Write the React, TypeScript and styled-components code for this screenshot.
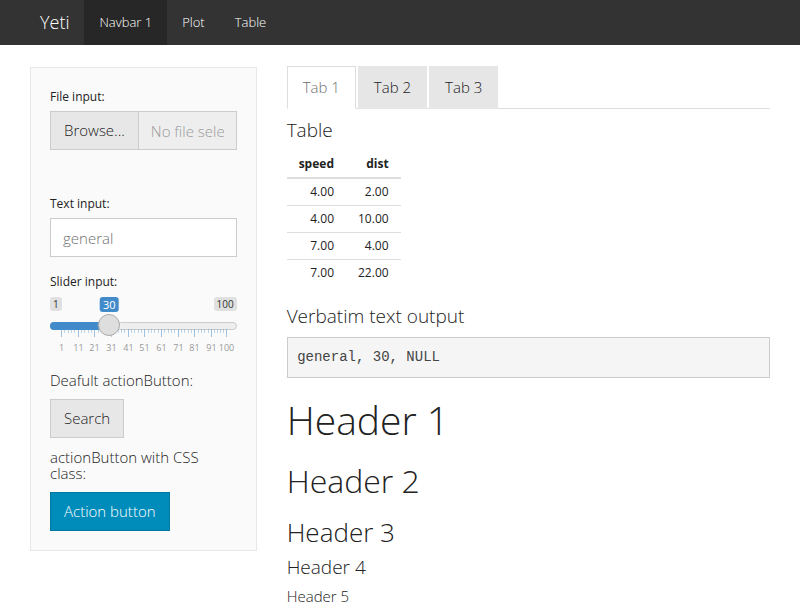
import React from "react";
import styled, { createGlobalStyle } from "styled-components";

const Global = createGlobalStyle`
  html, body { margin: 0; padding: 0; background: #fff; }
  body {
    font-family: "Open Sans", "Liberation Sans", sans-serif;
    font-weight: 300;
    font-size: 15px;
    line-height: 1.4;
    color: #222;
  }
  * { box-sizing: border-box; }
`;

const Navbar = styled.nav`
  height: 45px;
  background: #333;
  display: flex;
  align-items: stretch;
  padding: 0 0 0 25px;
`;

const Brand = styled.div`
  display: flex;
  align-items: center;
  padding: 0 15px;
  font-size: 18px;
  font-weight: 300;
  color: #fff;
`;

const NavLink = styled.div<{ $active?: boolean }>`
  display: flex;
  align-items: center;
  padding: 0 15px;
  font-size: 13px;
  font-weight: 300;
  color: #fff;
  background: ${(p) => (p.$active ? "#272727" : "transparent")};
`;

const Page = styled.div`
  display: grid;
  grid-template-columns: 226.67px 1fr;
  column-gap: 30px;
  padding: 21px 30px 0;
  align-items: start;
`;

const Well = styled.div`
  margin-top: 1px;
  background: #fafafa;
  border: 1px solid #e8e8e8;
  padding: 19px;
`;

const FormGroup = styled.div<{ $mb?: number }>`
  margin-bottom: ${(p) => (p.$mb ?? 15)}px;
`;

const Label = styled.label`
  display: block;
  font-size: 12px;
  font-weight: 400;
  line-height: 20px;
  margin-bottom: 4px;
  color: #222;
`;

const InputGroup = styled.div`
  display: flex;
  height: 39px;
`;

const BrowseButton = styled.span`
  flex: none;
  display: flex;
  align-items: center;
  padding: 0 13px;
  background: #e7e7e7;
  border: 1px solid #ccc;
  color: #222;
  font-size: 15px;
`;

const FileName = styled.input`
  flex: 1;
  min-width: 0;
  height: 39px;
  margin: 0 0 0 -1px;
  padding: 0 12px;
  border: 1px solid #ccc;
  background: #eee;
  font-family: inherit;
  font-weight: 300;
  font-size: 15px;
  color: #6f6f6f;
  &::placeholder { color: #999; opacity: 1; }
  outline: none;
`;

const TextInput = styled.input`
  display: block;
  width: 100%;
  height: 39px;
  margin: 0;
  padding: 0 12px;
  border: 1px solid #ccc;
  background: #fff;
  font-family: inherit;
  font-weight: 300;
  font-size: 15px;
  color: #6f6f6f;
  outline: none;
`;

const SliderBox = styled.div`
  position: relative;
  height: 61px;
`;

const EdgeLabel = styled.span<{ $side: "left" | "right" }>`
  position: absolute;
  top: 1px;
  ${(p) => (p.$side === "left" ? "left: 0;" : "right: 0;")}
  padding: 1px 3px;
  font-size: 10px;
  font-weight: 400;
  line-height: 12px;
  color: #333;
  background: rgba(0, 0, 0, 0.1);
  border-radius: 3px;
`;

const SingleLabel = styled.span`
  position: absolute;
  top: 1px;
  transform: translateX(-50%);
  padding: 1px 3px;
  font-size: 11px;
  font-weight: 400;
  line-height: 13px;
  color: #fff;
  background: #428bca;
  border-radius: 3px;
`;

const Track = styled.div`
  position: absolute;
  left: 0;
  right: 0;
  top: 26px;
  height: 8px;
  background: #eee;
  border: 1px solid #ccc;
  border-radius: 8px;
`;

const Bar = styled.div`
  position: absolute;
  left: 0;
  top: 26px;
  height: 8px;
  background: #428bca;
  border-radius: 8px 0 0 8px;
`;

const Handle = styled.div`
  position: absolute;
  top: 18px;
  width: 22px;
  height: 22px;
  margin-left: -11px;
  border-radius: 50%;
  background: #dedede;
  border: 1px solid #aaa;
  box-shadow: 1px 1px 3px rgba(255, 255, 255, 0.3);
`;

const Tick = styled.span<{ $major?: boolean }>`
  position: absolute;
  top: 33px;
  width: 1px;
  height: ${(p) => (p.$major ? 8 : 4)}px;
  background: ${(p) => (p.$major ? "rgba(66, 139, 202, 0.5)" : "rgba(66, 139, 202, 0.35)")};
`;

const TickText = styled.span`
  position: absolute;
  top: 46px;
  transform: translateX(-50%);
  font-size: 9px;
  font-weight: 400;
  line-height: 12px;
  color: #999;
  white-space: nowrap;
`;

const H5 = styled.h5`
  margin: 10.5px 0;
  font-size: 15px;
  font-weight: 300;
  line-height: 1.1;
  color: #222;
`;

const Button = styled.button<{ $primary?: boolean }>`
  display: inline-block;
  height: 39px;
  margin: 0;
  padding: 0 13px;
  font-family: inherit;
  font-weight: 300;
  font-size: 15px;
  line-height: 1;
  border: 1px solid ${(p) => (p.$primary ? "#0079a1" : "#ccc")};
  background: ${(p) => (p.$primary ? "#008cba" : "#e7e7e7")};
  color: ${(p) => (p.$primary ? "#fff" : "#222")};
  border-radius: 0;
`;

const Main = styled.div``;

const Tabs = styled.div`
  display: flex;
  border-bottom: 1px solid #ddd;
`;

const Tab = styled.div<{ $active?: boolean }>`
  margin: 0 2px -1px 0;
  padding: 10px 15px;
  line-height: 21px;
  font-size: 15px;
  border: 1px solid ${(p) => (p.$active ? "#ddd" : "transparent")};
  border-bottom-color: ${(p) => (p.$active ? "#fff" : "transparent")};
  background: ${(p) => (p.$active ? "#fff" : "#e6e6e6")};
  color: ${(p) => (p.$active ? "#6f6f6f" : "#222")};
`;

const H4 = styled.h4`
  margin: 10.5px 0;
  font-size: 19px;
  font-weight: 300;
  line-height: 1.1;
  color: #222;
`;

const Table = styled.table`
  border-collapse: collapse;
  margin-bottom: 20px;
  font-size: 12px;
`;

const Th = styled.th`
  padding: 4px 12px;
  line-height: 18px;
  text-align: right;
  font-weight: 700;
  border-bottom: 2px solid #ddd;
  color: #222;
`;

const Td = styled.td`
  padding: 4px 12px;
  line-height: 18px;
  text-align: right;
  font-weight: 400;
  color: #222;
`;

const Tr = styled.tr`
  & + & > td { border-top: 1px solid #ddd; }
`;

const Pre = styled.pre`
  margin: 0 0 10.5px;
  padding: 9.5px 9.5px 10px;
  font-family: "Liberation Mono", "Courier New", monospace;
  font-size: 14px;
  line-height: 19px;
  color: #444;
  background: #f5f5f5;
  border: 1px solid #ccc;
`;

const Heading = styled.div<{ $size: number; $mt: number }>`
  margin: ${(p) => p.$mt}px 0 10.5px;
  font-size: ${(p) => p.$size}px;
  font-weight: 300;
  line-height: 1.1;
  color: #222;
`;

const minV = 1;
const maxV = 100;
const gStart = 11;
const gEnd = 176;
const pos = (v: number) => gStart + ((v - minV) / (maxV - minV)) * (gEnd - gStart);
const majors = [1, 11, 21, 31, 41, 51, 61, 71, 81, 91, 100];
const minors: number[] = [];
for (let i = 0; i < majors.length - 1; i++) {
  const a = majors[i];
  const b = majors[i + 1];
  for (let k = 1; k <= 4; k++) minors.push(a + ((b - a) * k) / 5);
}

const rows = [
  ["4.00", "2.00"],
  ["4.00", "10.00"],
  ["7.00", "4.00"],
  ["7.00", "22.00"],
];

export default function App() {
  const value = 30;
  const hx = pos(value);
  return (
    <>
      <Global />
      <Navbar>
        <Brand>Yeti</Brand>
        <NavLink $active>Navbar 1</NavLink>
        <NavLink>Plot</NavLink>
        <NavLink>Table</NavLink>
      </Navbar>
      <Page>
        <Well>
          <FormGroup $mb={44}>
            <Label>File input:</Label>
            <InputGroup>
              <BrowseButton>Browse...</BrowseButton>
              <FileName readOnly placeholder="No file selected" />
            </InputGroup>
          </FormGroup>
          <FormGroup>
            <Label>Text input:</Label>
            <TextInput defaultValue="general" />
          </FormGroup>
          <FormGroup>
            <Label>Slider input:</Label>
            <SliderBox>
              <Track />
              <Bar style={{ width: hx }} />
              <EdgeLabel $side="left">1</EdgeLabel>
              <EdgeLabel $side="right">100</EdgeLabel>
              <SingleLabel style={{ left: hx }}>{value}</SingleLabel>
              {minors.map((v) => (
                <Tick key={"m" + v} style={{ left: Math.round(pos(v)) }} />
              ))}
              {majors.map((v) => (
                <Tick key={"M" + v} $major style={{ left: Math.round(pos(v)) }} />
              ))}
              {majors.map((v) => (
                <TickText key={"t" + v} style={{ left: Math.round(pos(v)) + 0.5 }}>
                  {v}
                </TickText>
              ))}
              <Handle style={{ left: hx }} />
            </SliderBox>
          </FormGroup>
          <H5>Deafult actionButton:</H5>
          <Button>Search</Button>
          <H5>
            actionButton with CSS
            <br />
            class:
          </H5>
          <Button $primary>Action button</Button>
        </Well>
        <Main>
          <Tabs>
            <Tab $active>Tab 1</Tab>
            <Tab>Tab 2</Tab>
            <Tab>Tab 3</Tab>
          </Tabs>
          <H4>Table</H4>
          <Table>
            <thead>
              <tr>
                <Th>speed</Th>
                <Th>dist</Th>
              </tr>
            </thead>
            <tbody>
              {rows.map((r, i) => (
                <Tr key={i}>
                  <Td>{r[0]}</Td>
                  <Td>{r[1]}</Td>
                </Tr>
              ))}
            </tbody>
          </Table>
          <H4>Verbatim text output</H4>
          <Pre>general, 30, NULL</Pre>
          <Heading $size={39} $mt={21}>Header 1</Heading>
          <Heading $size={32} $mt={21}>Header 2</Heading>
          <Heading $size={26} $mt={20}>Header 3</Heading>
          <Heading $size={19} $mt={9}>Header 4</Heading>
          <Heading $size={15} $mt={8.5}>Header 5</Heading>
        </Main>
      </Page>
    </>
  );
}
